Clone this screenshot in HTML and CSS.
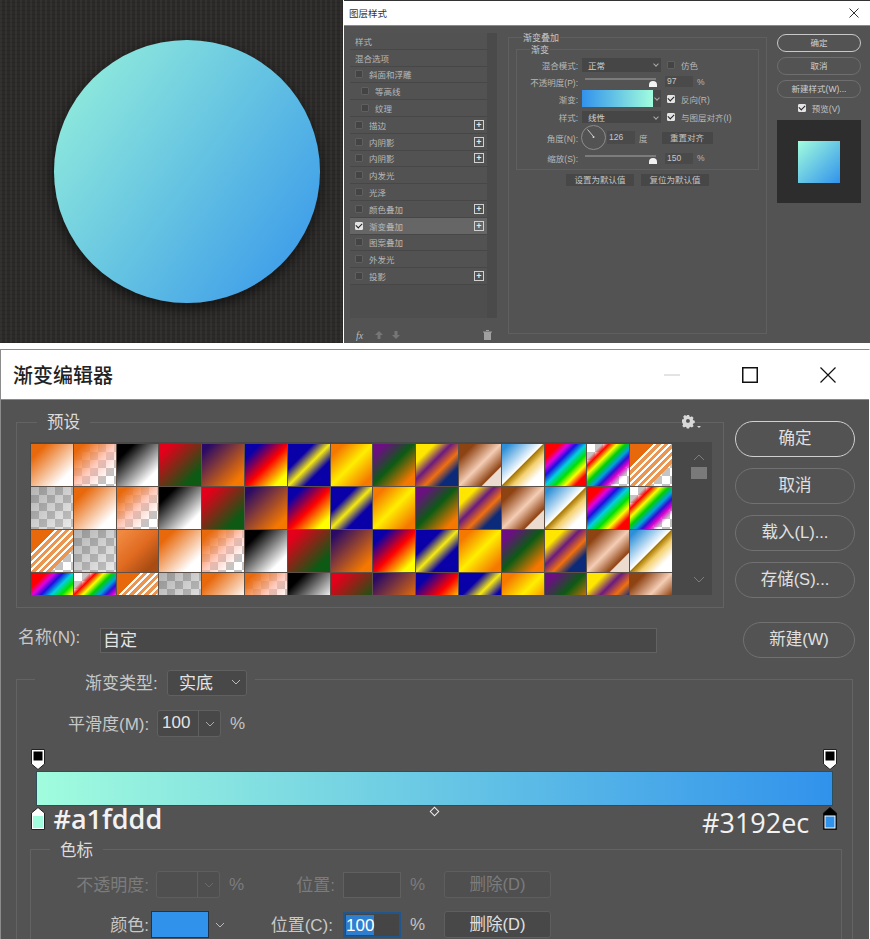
FILE: index.html
```html
<!DOCTYPE html>
<html lang="zh-Hans">
<head>
    <meta charset="UTF-8">
    <meta name="viewport" content="width=device-width, initial-scale=1.0">
    <title>渐变编辑器</title>
    <link rel="stylesheet" href="styles.css">
</head>
<body>
    <div class="top">
        <div class="canvas"><div class="circle"></div></div>
        <div class="layer-dialog">
            <div class="small-title">
                <span>图层样式</span>
                <svg class="small-close" width="10" height="10" viewBox="0 0 10 10"><path d="M0.5 0.5L9.5 9.5M9.5 0.5L0.5 9.5" stroke="#333" fill="none"/></svg>
            </div>
            <div class="layer-body">
                <div class="style-panel">
                    <div class="style-list">
                        <div class="style-rows">
                            <div class="style-row">样式</div>
                            <div class="style-row">混合选项</div>
                            <div class="style-row"><i class="cb"></i>斜面和浮雕</div>
                            <div class="style-row sub"><i class="cb"></i>等高线</div>
                            <div class="style-row sub"><i class="cb"></i>纹理</div>
                            <div class="style-row"><i class="cb"></i>描边<b class="plus">+</b></div>
                            <div class="style-row"><i class="cb"></i>内阴影<b class="plus">+</b></div>
                            <div class="style-row"><i class="cb"></i>内阴影<b class="plus">+</b></div>
                            <div class="style-row"><i class="cb"></i>内发光</div>
                            <div class="style-row"><i class="cb"></i>光泽</div>
                            <div class="style-row"><i class="cb"></i>颜色叠加<b class="plus">+</b></div>
                            <div class="style-row active"><i class="cb on"></i>渐变叠加<b class="plus">+</b></div>
                            <div class="style-row"><i class="cb"></i>图案叠加</div>
                            <div class="style-row"><i class="cb"></i>外发光</div>
                            <div class="style-row"><i class="cb"></i>投影<b class="plus">+</b></div>
                        </div>
                        <div class="style-scroll"></div>
                    </div>
                    <div class="style-foot">
                        <em class="fx">fx</em>
                        <svg class="foot-arrow" width="8" height="8" viewBox="0 0 8 8"><path d="M4 0L8 4H5.500V8H2.500V4H0Z" fill="#767676"/></svg>
                        <svg class="foot-arrow" width="8" height="8" viewBox="0 0 8 8"><path d="M4 8L8 4H5.500V0H2.500V4H0Z" fill="#767676"/></svg>
                        <svg class="trash" width="9" height="10" viewBox="0 0 9 10"><path d="M0 1.500H9V2.500H8V10H1V2.500H0ZM3 0H6V1H3Z" fill="#a0a0a0"/></svg>
                    </div>
                </div>
                <div class="overlay-group">
                    <span class="small-legend legend-outer">渐变叠加</span>
                    <div class="inner-group">
                        <span class="small-legend legend-inner">渐变</span>
                        <div class="form-row row-blend">
                            <label>混合模式:</label>
                            <span class="mini-select wide">正常</span>
                            <i class="cb"></i><span class="opt">仿色</span>
                        </div>
                        <div class="form-row row-opacity">
                            <label>不透明度(P):</label>
                            <span class="slider"><i class="thumb"></i></span>
                            <span class="mini-input">97</span><span class="unit">%</span>
                        </div>
                        <div class="form-row row-gradient">
                            <label>渐变:</label>
                            <span class="mini-gradient"></span><span class="mini-arrow"></span>
                            <i class="cb on"></i><span class="opt">反向(R)</span>
                        </div>
                        <div class="form-row row-style">
                            <label>样式:</label>
                            <span class="mini-select wide">线性</span>
                            <i class="cb on"></i><span class="opt">与图层对齐(I)</span>
                        </div>
                        <div class="form-row row-angle">
                            <label>角度(N):</label>
                            <svg class="dial" width="25" height="25" viewBox="0 0 25 25"><circle cx="12.500" cy="12.500" r="12" fill="none" stroke="#8c8c8c"/><path d="M6.500 4.500L12 11" stroke="#c8c8c8" fill="none"/><circle cx="12.500" cy="12" r="1" fill="#ddd"/></svg>
                            <span class="mini-input">126</span><span class="unit">度</span>
                            <span class="mini-btn reset">重置对齐</span>
                        </div>
                        <div class="form-row row-scale">
                            <label>缩放(S):</label>
                            <span class="slider"><i class="thumb"></i></span>
                            <span class="mini-input">150</span><span class="unit">%</span>
                        </div>
                    </div>
                    <div class="default-btns">
                        <span class="mini-btn">设置为默认值</span>
                        <span class="mini-btn">复位为默认值</span>
                    </div>
                </div>
                <div class="side-col">
                    <span class="pill first">确定</span>
                    <span class="pill">取消</span>
                    <span class="pill">新建样式(W)...</span>
                    <div class="preview-check"><i class="cb on"></i>预览(V)</div>
                    <div class="preview-box"><div class="preview-square"></div></div>
                </div>
            </div>
        </div>
    </div>

    <div class="editor">
        <div class="editor-title">
            <span>渐变编辑器</span>
            <div class="win-btns">
                <svg width="16" height="16" viewBox="0 0 16 16"><path d="M0 8H16" stroke="#c8c8c8" fill="none"/></svg>
                <svg width="16" height="16" viewBox="0 0 16 16"><rect x="0.750" y="0.750" width="14.500" height="14.500" stroke="#111" stroke-width="1.500" fill="none"/></svg>
                <svg width="16" height="16" viewBox="0 0 16 16"><path d="M0.500 0.500L15.500 15.500M15.500 0.500L0.500 15.500" stroke="#111" stroke-width="1.200" fill="none"/></svg>
            </div>
        </div>
        <div class="editor-body">
            <div class="upper">
                <div class="preset-col">
                    <div class="preset-group">
                        <span class="legend preset-legend">预设</span>
                        <svg class="gear" width="20" height="14" viewBox="0 0 20 14"><path d="M5.600 0h2.800l.4 1.900 1.300.5 1.600-1 2 2-1 1.600.5 1.300 1.800.4v2.800l-1.800.4-.5 1.300 1 1.600-2 2-1.600-1-1.300.5-.4 1.700H5.600l-.4-1.700-1.300-.5-1.600 1-2-2 1-1.600-.5-1.300L0 8.100V5.300l1.800-.4.500-1.300-1-1.600 2-2 1.600 1 1.300-.5ZM7 4.700a2.300 2.300 0 1 0 0 4.600a2.300 2.300 0 0 0 0-4.600Z" fill="#d8d8d8" fill-rule="evenodd" transform="scale(.85)"/><path d="M15 11h4l-2 2z" fill="#d8d8d8"/></svg>
                        <div class="preset-panel">
                            <div class="swatches">
                                <i class="sw ow"></i><i class="sw ot"></i><i class="sw bw"></i><i class="sw rg"></i><i class="sw vo"></i><i class="sw bry"></i><i class="sw byb"></i><i class="sw oy"></i><i class="sw vgo"></i><i class="sw yvo"></i><i class="sw cop"></i><i class="sw chr"></i><i class="sw rb"></i><i class="sw rbt"></i><i class="sw str"></i>
                                <i class="sw chk"></i><i class="sw ow"></i><i class="sw ot"></i><i class="sw bw"></i><i class="sw rg"></i><i class="sw vo"></i><i class="sw bry"></i><i class="sw byb"></i><i class="sw oy"></i><i class="sw vgo"></i><i class="sw yvo"></i><i class="sw cop"></i><i class="sw chr"></i><i class="sw rb"></i><i class="sw rbt"></i>
                                <i class="sw str"></i><i class="sw chk"></i><i class="sw bev"></i><i class="sw ow"></i><i class="sw ot"></i><i class="sw bw"></i><i class="sw rg"></i><i class="sw vo"></i><i class="sw bry"></i><i class="sw byb"></i><i class="sw oy"></i><i class="sw vgo"></i><i class="sw yvo"></i><i class="sw cop"></i><i class="sw chr"></i>
                                <i class="sw rb"></i><i class="sw rbt"></i><i class="sw str"></i><i class="sw chk"></i><i class="sw ow"></i><i class="sw ot"></i><i class="sw bw"></i><i class="sw rg"></i><i class="sw vo"></i><i class="sw bry"></i><i class="sw byb"></i><i class="sw oy"></i><i class="sw vgo"></i><i class="sw yvo"></i><i class="sw cop"></i>
                            </div>
                            <div class="preset-scroll">
                                <svg width="12" height="7" viewBox="0 0 12 7"><path d="M1 6L6 1L11 6" stroke="#7d7d7d" fill="none"/></svg>
                                <i class="scroll-thumb"></i>
                                <svg class="scroll-down" width="12" height="7" viewBox="0 0 12 7"><path d="M1 1L6 6L11 1" stroke="#7d7d7d" fill="none"/></svg>
                            </div>
                        </div>
                    </div>
                </div>
                <div class="editor-btns">
                    <span class="big-pill first">确定</span>
                    <span class="big-pill">取消</span>
                    <span class="big-pill">载入(L)...</span>
                    <span class="big-pill">存储(S)...</span>
                </div>
            </div>
            <div class="name-row">
                <label>名称(N):</label>
                <div class="name-input">自定</div>
                <span class="big-pill new-btn">新建(W)</span>
            </div>
            <div class="type-group">
                <div class="type-row">
                    <label>渐变类型:</label>
                    <span class="select type-select">实底
                        <svg width="10" height="6" viewBox="0 0 10 6"><path d="M1 1L5 5L9 1" stroke="#bbb" fill="none"/></svg>
                    </span>
                </div>
                <div class="smooth-row">
                    <label>平滑度(M):</label>
                    <span class="spin"><span>100</span><i class="spin-arrow"><svg width="10" height="6" viewBox="0 0 10 6"><path d="M1 1L5 5L9 1" stroke="#aaa" fill="none"/></svg></i></span>
                    <span class="percent">%</span>
                </div>
                <div class="ramp-area">
                    <svg class="stop stop-tl" width="14" height="21" viewBox="0 0 14 21"><path d="M.5 .5H13.500V15L7 20.500L.5 15Z" fill="#fff" stroke="#222"/><rect x="2.500" y="2.500" width="9" height="9" fill="#000"/></svg>
                    <svg class="stop stop-tr" width="14" height="21" viewBox="0 0 14 21"><path d="M.5 .5H13.500V15L7 20.500L.5 15Z" fill="#fff" stroke="#222"/><rect x="2.500" y="2.500" width="9" height="9" fill="#000"/></svg>
                    <div class="ramp"></div>
                    <svg class="stop stop-bl" width="14" height="23" viewBox="0 0 14 23"><path d="M7 .5L13.500 6V22.500H.5V6Z" fill="#fff" stroke="#222"/><rect x="2" y="9" width="10" height="12" fill="#a1fddd"/></svg>
                    <svg class="stop stop-br" width="14" height="23" viewBox="0 0 14 23"><path d="M7 .5L13.500 6V22.500H.5V6Z" fill="#000" stroke="#111"/><rect x="1.500" y="8.500" width="11" height="13" fill="#fff"/><rect x="2.500" y="9.500" width="9" height="11" fill="#3192ec"/></svg>
                    <i class="midpoint"></i>
                    <span class="hex hex-left">#a1fddd</span>
                    <span class="hex hex-right">#3192ec</span>
                </div>
                <div class="stop-group">
                    <span class="legend stop-legend">色标</span>
                    <div class="stop-row off">
                        <label class="lbl-a">不透明度:</label>
                        <span class="spin"><span></span><i class="spin-arrow"><svg width="10" height="6" viewBox="0 0 10 6"><path d="M1 1L5 5L9 1" stroke="#6a6a6a" fill="none"/></svg></i></span>
                        <span class="percent">%</span>
                        <label class="lbl-b">位置:</label>
                        <span class="pos-input"></span>
                        <span class="percent">%</span>
                        <span class="del-btn">删除(D)</span>
                    </div>
                    <div class="stop-row">
                        <label class="lbl-a">颜色:</label>
                        <span class="color-box"></span>
                        <svg class="color-arrow" width="10" height="6" viewBox="0 0 10 6"><path d="M1 1L5 5L9 1" stroke="#bbb" fill="none"/></svg>
                        <label class="lbl-b">位置(C):</label>
                        <span class="pos-input focus"><span class="sel">100</span></span>
                        <span class="percent">%</span>
                        <span class="del-btn">删除(D)</span>
                    </div>
                </div>
            </div>
        </div>
    </div>
</body>
</html>
```

FILE: styles.css
```css
:root {
    --panel: #535353;
    --field: #464646;
    --line: #474747;
    --text: #d6d6d6;
    --dim: #b4b4b4;
}
* {
    box-sizing: border-box;
    margin: 0;
    padding: 0;
}
html, body {
    width: 870px;
    height: 939px;
    overflow: hidden;
}
body {
    font-family: "Liberation Sans", "Noto Sans CJK SC", sans-serif;
    background: #fff;
    color: var(--text);
}
i, em, b {
    font-style: normal;
    display: block;
}

/* top strip: canvas + layer style dialog */
.top {
    display: flex;
    height: 343px;
    margin-bottom: 6px;
}
.canvas {
    width: 343px;
    height: 343px;
    padding: 40px 0 0 54px;
    margin-right: 1px;
    background-color: #2b2a29;
    background-image:
        repeating-linear-gradient(90deg, rgba(255,255,255,.035) 0 2px, transparent 2px 5px),
        repeating-linear-gradient(0deg, rgba(0,0,0,.1) 0 1px, transparent 1px 4px);
}
.circle {
    width: 266px;
    height: 263px;
    border-radius: 50%;
    background: linear-gradient(126deg, #8de8dc 12%, #66c4e2 50%, #3e9de9 90%);
    box-shadow: 0 5px 14px rgba(0,0,0,.6);
}
.layer-dialog {
    flex: 1;
    display: flex;
    flex-direction: column;
    background: var(--panel);
    border-top: 1px solid #333;
}
.small-title {
    height: 25px;
    flex: none;
    display: flex;
    align-items: center;
    justify-content: space-between;
    padding: 0 11px 0 5px;
    background: #fff;
    color: #333;
    font-size: 9.500px;
    border-bottom: 1px solid #8a8a8a;
}
.layer-body {
    flex: 1;
    display: flex;
    padding: 7px 9px 8px 6px;
}
.style-panel {
    width: 147px;
    display: flex;
    flex-direction: column;
    margin-right: 11px;
}
.style-list {
    display: flex;
    height: 285px;
    background: #4e4e4e;
}
.style-rows {
    width: 137px;
}
.style-row {
    height: 16.800px;
    display: flex;
    align-items: center;
    padding-left: 5px;
    font-size: 8.500px;
    color: #b8b8b8;
    border-bottom: 1px solid var(--line);
    background: #525252;
}
.style-row.sub {
    padding-left: 11px;
}
.style-row.active {
    background: #666;
}
.style-scroll {
    flex: 1;
    background: #4a4a4a;
}
.cb {
    flex: none;
    width: 8px;
    height: 8px;
    margin-right: 6px;
    background: #444;
    border: 1px solid #5f5f5f;
    border-radius: 1px;
}
.cb.on {
    background: #e4e4e4;
    border-color: #e4e4e4;
    position: relative;
}
.cb.on::after {
    content: "";
    position: absolute;
    left: 0;
    top: 0;
    width: 5px;
    height: 3px;
    border-left: 1.500px solid #222;
    border-bottom: 1.500px solid #222;
    transform: rotate(-45deg);
}
.plus {
    margin-left: auto;
    margin-right: 3px;
    width: 10px;
    height: 10px;
    border: 1px solid #d0d0d0;
    color: #e8e8e8;
    font: bold 9px/8px "Liberation Sans", sans-serif;
    text-align: center;
}
.style-foot {
    display: flex;
    align-items: center;
    height: 16px;
    margin-top: 9px;
    padding-left: 6px;
}
.fx {
    font: italic 10px "Liberation Serif", serif;
    color: #bcbcbc;
    margin-right: 12px;
}
.foot-arrow {
    margin-right: 9px;
}
.trash {
    margin-left: auto;
    margin-right: 5px;
}
.overlay-group {
    position: relative;
    width: 259px;
    height: 297px;
    margin-top: 4px;
    padding: 11px 7px 0;
    margin-right: 10px;
    border: 1px solid #5f5f5f;
}
.small-legend {
    position: absolute;
    font-size: 9px;
    padding: 0 1px;
    background: var(--panel);
    color: #c4c4c4;
    line-height: 12px;
}
.legend-outer {
    left: 13px;
    top: -6px;
}
.legend-inner {
    left: 13px;
    top: -6px;
}
.inner-group {
    position: relative;
    height: 121px;
    padding: 8px 0 0;
    border: 1px solid #5f5f5f;
}
.form-row {
    display: flex;
    align-items: center;
    font-size: 8.500px;
    color: #b8b8b8;
}
.form-row label {
    width: 61px;
    margin-right: 4px;
    text-align: right;
}
.row-blend { height: 14px; margin-bottom: 4px; }
.row-opacity { height: 11px; margin-bottom: 3px; }
.row-gradient { height: 17px; margin-bottom: 4px; }
.row-style { height: 12px; margin-bottom: 2px; }
.row-angle { height: 25px; margin-bottom: 2px; }
.row-scale { height: 12px; }
.form-row .cb {
    margin-left: 6px;
    margin-right: 6px;
}
.mini-select {
    height: 100%;
    width: 79px;
    padding: 0 0 0 6px;
    display: flex;
    align-items: center;
    background: var(--field);
    color: #cfcfcf;
    position: relative;
}
.mini-select::after {
    content: "";
    position: absolute;
    right: 3px;
    top: 4px;
    width: 3px;
    height: 3px;
    border-right: 1px solid #aaa;
    border-bottom: 1px solid #aaa;
    transform: rotate(45deg);
}
.slider {
    position: relative;
    width: 71px;
    height: 2px;
    margin: -5px 9px 0 3px;
    background: #7c7c7c;
}
.thumb {
    position: absolute;
    right: -1px;
    top: 3px;
    width: 8px;
    height: 6px;
    background: #f2f2f2;
    border-radius: 4px 4px 0 0;
}
.mini-input {
    width: 28px;
    height: 11px;
    padding-left: 2px;
    line-height: 11px;
    background: #4a4a4a;
    color: #c8c8c8;
}
.unit {
    margin-left: 4px;
}
.opt {
    font-size: 8.500px;
}
.mini-gradient {
    width: 71px;
    height: 17px;
    background: linear-gradient(90deg, #3192ec, #a1fddd);
}
.mini-arrow {
    position: relative;
    width: 8px;
    height: 17px;
    background: #484848;
}
.mini-arrow::after {
    content: "";
    position: absolute;
    left: 2px;
    top: 6px;
    width: 3px;
    height: 3px;
    border-right: 1px solid #aaa;
    border-bottom: 1px solid #aaa;
    transform: rotate(45deg);
}
.dial {
    margin-left: -1px;
    margin-right: 1px;
}
.row-angle .mini-input {
    height: 13px;
    line-height: 13px;
}
.mini-btn {
    background: #474747;
    height: 12px;
    line-height: 12px;
    text-align: center;
    font-size: 8.500px;
    color: #c4c4c4;
}
.reset {
    width: 51px;
    margin-left: 14px;
}
.default-btns {
    display: flex;
    gap: 7px;
    margin: 4px 0 0 50px;
}
.default-btns .mini-btn {
    width: 68px;
}
.side-col {
    width: 84px;
    display: flex;
    flex-direction: column;
    align-items: stretch;
}
.pill {
    height: 18px;
    margin-bottom: 5px;
    border: 1px solid #6e6e6e;
    border-radius: 9px;
    text-align: center;
    font-size: 8.500px;
    line-height: 16px;
    color: #d0d0d0;
}
.pill.first {
    margin-top: 1px;
    border-color: #c8c8c8;
}
.preview-check {
    display: flex;
    align-items: center;
    justify-content: center;
    height: 12px;
    margin: -1px 0 6px;
    font-size: 8.500px;
    color: #c4c4c4;
}
.preview-box {
    height: 83px;
    background: #2d2d2d;
    padding: 21px;
}
.preview-square {
    width: 42px;
    height: 42px;
    background: linear-gradient(135deg, #a1fddd, #3192ec);
}

/* gradient editor */
.editor {
    height: 590px;
    background: var(--panel);
    border: 1px solid #8c8c8c;
    border-bottom: 0;
    border-right-color: #fff;
}
.editor-title {
    height: 50px;
    display: flex;
    align-items: center;
    justify-content: space-between;
    padding: 0 33px 0 12px;
    background: #fff;
    color: #222;
    font-size: 20px;
    font-weight: 500;
    border-bottom: 1px solid #8a8a8a;
}
.win-btns {
    display: flex;
    gap: 62px;
}
.editor-body {
    padding: 0 13px 0 15px;
}
.upper {
    display: flex;
    height: 222px;
}
.preset-col {
    flex: none;
    width: 708px;
    padding-top: 22px;
}
.preset-group {
    position: relative;
    height: 186px;
    padding: 19px 11px 0 13px;
    border: 1px solid #636363;
}
.legend {
    position: absolute;
    padding: 0 10px;
    background: var(--panel);
    font-size: 16.500px;
    line-height: 20px;
    color: #dcdcdc;
}
.preset-legend {
    left: 20px;
    top: -11px;
}
.gear {
    position: absolute;
    right: 21px;
    top: -8px;
}
.preset-panel {
    display: flex;
    height: 153px;
    background: #484848;
}
.swatches {
    display: grid;
    flex: none;
    width: 641px;
    height: 151px;
    margin: 2px 0 0 1px;
    grid-template-columns: repeat(15, 1fr);
    grid-template-rows: 42px 42px 42px 22px;
    gap: 1px;
    background: #5c5048;
}
.sw {
    background-size: 100% 42px;
    background-repeat: no-repeat;
}
.ow { background-image: linear-gradient(135deg, #e8690c 18%, #fff 80%); }
.ot { background-image: linear-gradient(135deg, #e8690c 12%, rgba(255,180,160,.7) 50%, transparent 80%), repeating-conic-gradient(#c4c4c4 0 25%, #fff 0 50%); background-size: 100% 42px, 16px 16px; background-repeat: no-repeat, repeat; }
.bw { background-image: linear-gradient(135deg, #000 20%, #fff 80%); }
.rg { background-image: linear-gradient(135deg, #e3001a 15%, #0c5a14 80%); }
.vo { background-image: linear-gradient(135deg, #2a0a66 10%, #f57800 85%); }
.bry { background-image: linear-gradient(135deg, #0a00a8 18%, #f00 52%, #ff0 85%); }
.byb { background-image: linear-gradient(135deg, #0a00a8 30%, #f6ea10 50%, #0a00a8 70%); }
.oy { background-image: linear-gradient(135deg, #f57800 15%, #ffee00 50%, #f57800 88%); }
.vgo { background-image: linear-gradient(135deg, #6a1080 15%, #0c5a14 48%, #f57800 85%); }
.yvo { background-image: linear-gradient(135deg, #ffe600 22%, #6a1b80 42%, #f07010 60%, #0b2a7a 78%); }
.cop { background-image: linear-gradient(135deg, #8e4313 18%, #f4cdb4 50%, #8e4313 76%, #ecdcd0 78%); }
.chr { background-image: linear-gradient(135deg, #2d8fd8 8%, #fff 48%, #a87800 50%, #f4d070 62%, #fff 80%); }
.rb { background-image: linear-gradient(135deg, #f00 18%, #e000e0 28%, #1a10e0 38%, #00d0e0 50%, #00e000 62%, #ff0 74%, #f00 86%); }
.rbt { background-image: linear-gradient(135deg, transparent 18%, #f00 26%, #ff0 36%, #00d000 46%, #00a0e0 56%, #3010d0 64%, #e000d0 72%, transparent 82%), repeating-conic-gradient(#c4c4c4 0 25%, #fff 0 50%); background-size: 100% 42px, 16px 16px; background-repeat: no-repeat, repeat; }
.str { background-image: linear-gradient(135deg, #e8690c 28%, #fff 28% 31.500%, #ea9550 31.500% 37%, #fff 37% 40.500%, #ea9550 40.500% 46%, #fff 46% 49.500%, #ea9550 49.500% 55%, #fff 55% 58.500%, #ea9550 58.500% 64%, #fff 64% 67.500%, #ea9550 67.500% 73%, transparent 73%), repeating-conic-gradient(#c4c4c4 0 25%, #fff 0 50%); background-size: 100% 42px, 16px 16px; background-repeat: no-repeat, repeat; }
.chk { background-image: linear-gradient(135deg, rgba(130,130,130,.5), rgba(255,255,255,.3)), repeating-conic-gradient(#a8a8a8 0 25%, #e4e4e4 0 50%); background-size: 100% 42px, 16px 16px; background-repeat: no-repeat, repeat; }
.bev { background-image: linear-gradient(135deg, #f08840 10%, #e06a20 50%, #a84c14 85%); }
.preset-scroll {
    flex: 1;
    display: flex;
    flex-direction: column;
    align-items: center;
    padding: 12px 0 0 14px;
}
.scroll-thumb {
    width: 16px;
    height: 12px;
    margin-top: 6px;
    background: #7a7a7a;
}
.scroll-down {
    margin-top: auto;
    margin-bottom: 12px;
}
.editor-btns {
    flex: none;
    width: 120px;
    margin-left: 11px;
    padding-top: 21px;
    display: flex;
    flex-direction: column;
    gap: 11px;
}
.big-pill {
    display: block;
    height: 36px;
    border: 1px solid #717171;
    border-radius: 18px;
    text-align: center;
    font-size: 16.500px;
    line-height: 33px;
    color: #e0e0e0;
}
.big-pill.first {
    border: 1.500px solid #d0d0d0;
}
.name-row {
    display: flex;
    align-items: flex-start;
    height: 57px;
    font-size: 17px;
}
.name-row label {
    flex: none;
    width: 82px;
    margin: 4px 0 0 2px;
    color: #c8c8c8;
    line-height: 24px;
    white-space: nowrap;
}
.name-input {
    flex: none;
    width: 557px;
    height: 25px;
    margin-top: 6px;
    padding-left: 2px;
    line-height: 24px;
    background: #484848;
    border: 1px solid #626262;
    color: #e4e4e4;
}
.new-btn {
    flex: none;
    width: 112px;
    margin-left: 86px;
}
.type-group {
    position: relative;
    width: 837px;
    height: 260px;
    border: 1px solid #636363;
    border-bottom: 0;
    font-size: 17px;
}
.type-group label {
    color: #c8c8c8;
    padding-bottom: 2px;
}
.type-row {
    display: flex;
    align-items: center;
    position: absolute;
    left: 18px;
    top: -11px;
    padding: 0 8px 0 0;
    background: var(--panel);
    height: 27px;
}
.type-row label {
    padding-left: 50px;
    width: 132px;
    white-space: nowrap;
}
.select {
    width: 80px;
    height: 26px;
    display: flex;
    align-items: center;
    justify-content: space-between;
    padding: 0 5px 2px 11px;
    background: #484848;
    border: 1px solid #606060;
    border-radius: 3px;
    color: #e4e4e4;
}
.smooth-row {
    display: flex;
    align-items: center;
    height: 27px;
    margin-top: 30px;
    padding-left: 51px;
}
.smooth-row label {
    width: 89px;
    white-space: nowrap;
}
.spin {
    width: 64px;
    height: 27px;
    display: flex;
    background: #484848;
    border: 1px solid #606060;
    border-radius: 3px;
    color: #e4e4e4;
    font-size: 17px;
    line-height: 24px;
}
.spin span {
    flex: 1;
    padding-left: 4px;
}
.spin-arrow {
    width: 22px;
    display: flex;
    align-items: center;
    justify-content: center;
    border-left: 1px solid #606060;
}
.percent {
    width: 24px;
    margin-left: 9px;
    color: #c4c4c4;
}
.ramp-area {
    position: relative;
    height: 112px;
}
.ramp {
    position: absolute;
    left: 19px;
    top: 34px;
    width: 797px;
    height: 35px;
    background: linear-gradient(90deg, #a1fddd, #3192ec);
    border: 1px solid #2c4f5c;
}
.stop {
    position: absolute;
}
.stop-tl { left: 14px; top: 12px; }
.stop-tr { left: 806px; top: 12px; }
.stop-bl { left: 14px; top: 70px; }
.stop-br { left: 806px; top: 70px; }
.midpoint {
    position: absolute;
    left: 414px;
    top: 71px;
    width: 7px;
    height: 7px;
    background: var(--panel);
    border: 1px solid #eee;
    transform: rotate(45deg);
}
.hex {
    position: absolute;
    font-family: "Open Sans", "Noto Sans", sans-serif;
    font-size: 27px;
    line-height: 32px;
    color: #f2f2f2;
}
.hex-left {
    left: 36.500px;
    top: 66px;
    font-weight: 600;
}
.hex-right {
    left: 685px;
    top: 70px;
}
.stop-group {
    position: relative;
    width: 812px;
    height: 120px;
    margin-left: 13px;
    padding-top: 21px;
    border: 1px solid #636363;
    border-bottom: 0;
}
.stop-legend {
    left: 19px;
    top: -10px;
}
.stop-row {
    display: flex;
    align-items: center;
    height: 27px;
    margin-bottom: 13px;
}
.stop-row.off label,
.stop-row.off .percent {
    color: #7c7c7c;
}
.stop-row.off .spin {
    background: #4f4f4f;
    border-color: #5e5e5e;
}
.lbl-a {
    width: 119px;
    padding-right: 1px;
    margin-right: 6px;
    text-align: right;
    white-space: nowrap;
}
.lbl-b {
    width: 69px;
    text-align: right;
    margin-right: 8px;
    white-space: nowrap;
}
.stop-row.off .lbl-b {
    margin-left: 13px;
}
.color-box {
    width: 58px;
    height: 27px;
    margin-left: -5px;
    background: #3192ec;
    border: 1px solid #20334a;
}
.color-arrow {
    margin: 0 0 0 6px;
}
.stop-row:not(.off) .lbl-b {
    margin-left: 39px;
    margin-right: 10px;
}
.pos-input {
    width: 58px;
    height: 26px;
    font-size: 17px;
    background: #4c4c4c;
    border: 1px solid #606060;
}
.pos-input.focus {
    background: #454545;
    border: 2px solid #21568c;
    padding-left: 1px;
}
.sel {
    display: inline-block;
    height: 20px;
    margin-top: 1px;
    line-height: 21px;
    background: #2f7fd0;
    color: #fff;
}
.del-btn {
    width: 107px;
    height: 27px;
    margin-left: 10px;
    text-align: center;
    font-size: 16.500px;
    line-height: 25px;
    background: #484848;
    border: 1px solid #5e5e5e;
    border-radius: 3px;
    color: #e0e0e0;
}
.stop-row.off .del-btn {
    background: #4f4f4f;
    color: #7c7c7c;
}
```
